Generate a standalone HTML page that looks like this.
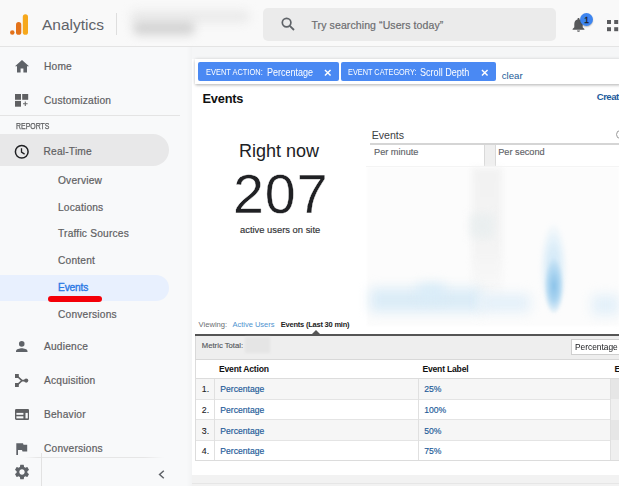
<!DOCTYPE html>
<html><head><meta charset="utf-8">
<style>
*{box-sizing:border-box;margin:0;padding:0}
html,body{width:621px;height:486px;overflow:hidden;background:#fff;font-family:"Liberation Sans",sans-serif;position:relative}
.a{position:absolute;white-space:nowrap;line-height:1}
</style></head><body>
<div class="a" style="left:0px;top:0px;width:621px;height:46px;background:#f9f9f9;"></div>
<div class="a" style="left:0px;top:46px;width:621px;height:1px;background:#e4e4e4;"></div>
<svg class="a" style="left:9px;top:13px" width="21" height="24" viewBox="0 0 21 24">
  <rect x="13.8" y="1.2" width="5.2" height="20.6" rx="2.6" fill="#f6a81c"/>
  <rect x="7" y="9.1" width="5.3" height="12.7" rx="2.65" fill="#e3721a"/>
  <circle cx="3.3" cy="19.6" r="2.25" fill="#e3721a"/>
</svg>
<div class="a" style="left:42px;top:17.48px;font-size:15.5px;color:#5f6368;">Analytics</div>
<div class="a" style="left:116px;top:13px;width:1px;height:22px;background:#dedede;"></div>
<div class="a" style="left:130px;top:10px;width:120px;height:13px;background:#ebebeb;filter:blur(5px);border-radius:6px"></div>
<div class="a" style="left:133px;top:21px;width:62px;height:14px;background:#d4d4d4;filter:blur(5px);border-radius:6px"></div>
<div class="a" style="left:263px;top:8px;width:293px;height:33px;background:#ebebeb;border-radius:5px"></div>
<svg class="a" style="left:281px;top:17px" width="14" height="14" viewBox="0 0 14 14"><circle cx="5.6" cy="5.6" r="4.3" fill="none" stroke="#5f6368" stroke-width="1.7"/><line x1="8.8" y1="8.8" x2="13" y2="13" stroke="#5f6368" stroke-width="1.8"/></svg>
<div class="a" style="left:311.5px;top:19.51px;font-size:10.5px;color:#6b6d70;letter-spacing:.1px;-webkit-text-stroke:.2px #6b6d70">Try searching “Users today”</div>
<svg class="a" style="left:572px;top:17px" width="13" height="15" viewBox="0 0 13 15"><path d="M6.5 1c-.6 0-1 .4-1 1v.5C3.4 3 2.3 4.8 2.3 7v3.3L.6 12v.8h11.8V12l-1.7-1.7V7c0-2.2-1.1-4-3.2-4.5V2c0-.6-.4-1-1-1z M5 13.4h3c0 .8-.7 1.4-1.5 1.4S5 14.2 5 13.4z" fill="#58595b"/></svg>
<div class="a" style="left:580px;top:13px;width:13.3px;height:13.3px;border-radius:50%;background:#3d85f0;box-shadow:0 1px 1.5px rgba(0,0,0,.25)"></div>
<div class="a" style="left:584.2px;top:16.10px;font-size:8.5px;color:#202124;-webkit-text-stroke:.3px #202124">1</div>
<svg class="a" style="left:607px;top:20px" width="12" height="12" viewBox="0 0 12 12"><rect x="0" y="0" width="4" height="4" fill="#5a5b5e"/><rect x="7.2" y="0" width="4" height="4" fill="#5a5b5e"/><rect x="0" y="7.2" width="4" height="4" fill="#5a5b5e"/><rect x="7.2" y="7.2" width="4" height="4" fill="#5a5b5e"/></svg>
<div class="a" style="left:0px;top:47px;width:192px;height:439px;background:#f8f9fa;"></div>
<div class="a" style="left:186px;top:47px;width:6px;height:439px;background:linear-gradient(90deg,rgba(0,0,0,0),rgba(0,0,0,.025));"></div>
<div class="a" style="left:0px;top:115px;width:180px;height:1px;background:#e4e4e4;"></div>
<svg class="a" style="left:14.5px;top:60px" width="14" height="12.5" viewBox="0 0 14 12.5"><path d="M7 0L0 6.2h2V12.5h3.6V8.6h2.8v3.9H12V6.2h2z" fill="#5f6368"/></svg>
<div class="a" style="left:44px;top:61.57px;font-size:10.2px;color:#5f6062;letter-spacing:.2px;-webkit-text-stroke:.2px #5f6062;">Home</div>
<svg class="a" style="left:15px;top:94px" width="13.5" height="12.8" viewBox="0 0 13.5 12.8"><rect x="0" y="0" width="6" height="5.8" fill="#5f6062"/><rect x="7.2" y="0" width="6" height="5.8" fill="#5f6062"/><rect x="0" y="6.9" width="6" height="5.8" fill="#5f6062"/><path d="M10.3 7.4v4.6M8 9.7h4.6" stroke="#6a6b6d" stroke-width="1.1"/></svg>
<div class="a" style="left:44px;top:95.67px;font-size:10.2px;color:#5f6062;letter-spacing:.2px;-webkit-text-stroke:.2px #5f6062;">Customization</div>
<div class="a" style="left:16px;top:121.89px;font-size:8.4px;color:#5f6062;transform:scaleX(.83);transform-origin:0 0;-webkit-text-stroke:.25px #5f6062">REPORTS</div>
<div class="a" style="left:0px;top:134px;width:169px;height:32px;background:#e8e8e9;border-radius:0 16px 16px 0"></div>
<svg class="a" style="left:14px;top:143.5px" width="15.5" height="15.5" viewBox="0 0 15.5 15.5"><circle cx="7.75" cy="7.75" r="6.35" fill="none" stroke="#202124" stroke-width="1.5"/><path d="M7.5 4.3V8.1L10.6 10.1" fill="none" stroke="#202124" stroke-width="1.3"/></svg>
<div class="a" style="left:43.5px;top:146.57px;font-size:10.2px;color:#5f6062;letter-spacing:.2px;-webkit-text-stroke:.2px #5f6062;">Real-Time</div>
<div class="a" style="left:58px;top:175.87px;font-size:10.2px;color:#5f6062;letter-spacing:.2px;-webkit-text-stroke:.2px #5f6062;">Overview</div>
<div class="a" style="left:58px;top:202.57px;font-size:10.2px;color:#5f6062;letter-spacing:.2px;-webkit-text-stroke:.2px #5f6062;">Locations</div>
<div class="a" style="left:58px;top:229.17px;font-size:10.2px;color:#5f6062;letter-spacing:.2px;-webkit-text-stroke:.2px #5f6062;">Traffic Sources</div>
<div class="a" style="left:58px;top:256.07px;font-size:10.2px;color:#5f6062;letter-spacing:.2px;-webkit-text-stroke:.2px #5f6062;">Content</div>
<div class="a" style="left:0px;top:275px;width:169px;height:26px;background:#e8f0fe;border-radius:0 13px 13px 0"></div>
<div class="a" style="left:58px;top:283.37px;font-size:10.2px;color:#2a78e4;-webkit-text-stroke:.35px #2a78e4;letter-spacing:-.15px">Events</div>
<div class="a" style="left:47.8px;top:296.2px;width:54.2px;height:6.3px;background:#f40008;border-radius:3.1px"></div>
<div class="a" style="left:58px;top:310.37px;font-size:10.2px;color:#5f6062;letter-spacing:.2px;-webkit-text-stroke:.2px #5f6062;">Conversions</div>
<svg class="a" style="left:16px;top:340.5px" width="11.5" height="11.5" viewBox="0 0 12 12"><circle cx="6" cy="3" r="2.9" fill="#5f6368"/><path d="M0 12v-1.5c0-2 4-3 6-3s6 1 6 3V12z" fill="#5f6368"/></svg>
<div class="a" style="left:44px;top:342.17px;font-size:10.2px;color:#5f6062;letter-spacing:.2px;-webkit-text-stroke:.2px #5f6062;">Audience</div>
<svg class="a" style="left:14px;top:373px" width="15" height="15" viewBox="0 0 15 15"><path d="M3 3L8 7.6L3 12.2M8 7.6H12" fill="none" stroke="#5f6062" stroke-width="1.6"/><rect x="1" y="1" width="3.8" height="4" fill="#5f6062"/><rect x="1" y="10" width="3.8" height="4" fill="#5f6062"/><circle cx="12.2" cy="7.6" r="2.1" fill="#5f6062"/></svg>
<div class="a" style="left:44px;top:376.17px;font-size:10.2px;color:#5f6062;letter-spacing:.2px;-webkit-text-stroke:.2px #5f6062;">Acquisition</div>
<svg class="a" style="left:14.7px;top:408.9px" width="14.2" height="10.9" viewBox="0 0 14.2 10.9"><rect x="0" y="0" width="14.2" height="10.9" rx="1.3" fill="#5f6062"/><rect x="1.4" y="3.9" width="7" height="1.9" fill="#f8f9fa"/><rect x="1.4" y="7.3" width="7" height="2.1" fill="#f8f9fa"/><rect x="10.5" y="3.9" width="2.3" height="5.5" fill="#f8f9fa"/></svg>
<div class="a" style="left:44px;top:409.97px;font-size:10.2px;color:#5f6062;letter-spacing:.2px;-webkit-text-stroke:.2px #5f6062;">Behavior</div>
<svg class="a" style="left:16px;top:443px" width="11.5" height="12" viewBox="0 0 11.5 12"><path d="M0.3 0.3H7L7.5 1.8H11.2V8.5H6.5L6 7H2V12H0.3z" fill="#5f6368"/></svg>
<div class="a" style="left:44px;top:443.77px;font-size:10.2px;color:#5f6062;letter-spacing:.2px;-webkit-text-stroke:.2px #5f6062;">Conversions</div>
<div class="a" style="left:24px;top:457px;width:140px;height:1px;background:linear-gradient(90deg,rgba(230,230,230,0),#e6e6e6 14px,#e6e6e6 120px,rgba(230,230,230,0));"></div>
<div class="a" style="left:41px;top:453px;width:1px;height:33px;background:#e2e2e2;"></div>
<svg class="a" style="left:13px;top:462.8px" width="18" height="18" viewBox="0 0 24 24"><path fill="#5f6368" d="M19.14 12.94c.04-.3.06-.61.06-.94 0-.32-.02-.64-.07-.94l2.03-1.58a.49.49 0 00.12-.61l-1.92-3.32a.488.488 0 00-.59-.22l-2.39.96c-.5-.38-1.030-.7-1.62-.94l-.36-2.54a.484.484 0 00-.48-.41h-3.84c-.24 0-.43.17-.47.41l-.36 2.54c-.59.24-1.13.57-1.62.94l-2.39-.96a.48.48 0 00-.59.22L2.74 8.87c-.12.21-.08.47.12.61l2.03 1.58c-.05.3-.09.63-.09.94s.02.64.07.94l-2.03 1.58a.49.49 0 00-.12.61l1.920 3.32c.12.22.37.29.59.22l2.39-.96c.5.38 1.03.7 1.62.94l.36 2.54c.05.24.24.41.48.41h3.84c.24 0 .44-.17.47-.41l.36-2.54c.59-.24 1.13-.56 1.62-.94l2.39.96c.22.08.47 0 .59-.22l1.92-3.32c.12-.22.07-.47-.12-.61l-2.01-1.58zM12 15.6c-1.98 0-3.6-1.62-3.6-3.6s1.62-3.6 3.6-3.6 3.6 1.62 3.6 3.6-1.62 3.6-3.6 3.6z"/></svg>
<svg class="a" style="left:157.5px;top:469.5px" width="7" height="9" viewBox="0 0 7 9"><path d="M5.8 0.8L1.6 4.5L5.8 8.2" fill="none" stroke="#5f6368" stroke-width="1.5"/></svg>
<div class="a" style="left:192px;top:47px;width:429px;height:439px;background:#fff;"></div>
<div class="a" style="left:192px;top:47px;width:429px;height:12px;background:#f5f6f7;"></div>
<div class="a" style="left:195px;top:59px;width:426px;height:25px;background:#fff;box-shadow:0 0 3px rgba(0,0,0,.16),-.5px 1.5px 3px rgba(0,0,0,.2)"></div>
<div class="a" style="left:198px;top:62px;width:141px;height:19px;background:#4a89f3;border-radius:2px"></div>
<div class="a" style="left:205.5px;top:68.38px;font-size:9px;color:#fff;transform:scaleX(.83);transform-origin:0 0">EVENT ACTION:</div>
<div class="a" style="left:266.5px;top:67.88px;font-size:10.3px;color:#fff;transform:scaleX(.875);transform-origin:0 0">Percentage</div>
<svg class="a" style="left:324px;top:69px" width="7.5" height="7.5" viewBox="0 0 8 8"><path d="M1 1L7 7M7 1L1 7" stroke="#fff" stroke-width="1.5"/></svg>
<div class="a" style="left:341px;top:62px;width:154.5px;height:19px;background:#4a89f3;border-radius:2px"></div>
<div class="a" style="left:348px;top:68.38px;font-size:9px;color:#fff;transform:scaleX(.815);transform-origin:0 0">EVENT CATEGORY:</div>
<div class="a" style="left:420.3px;top:67.88px;font-size:10.3px;color:#fff;transform:scaleX(.88);transform-origin:0 0">Scroll Depth</div>
<svg class="a" style="left:481px;top:69px" width="7.5" height="7.5" viewBox="0 0 8 8"><path d="M1 1L7 7M7 1L1 7" stroke="#fff" stroke-width="1.5"/></svg>
<div class="a" style="left:501.8px;top:71.37px;font-size:9.6px;color:#215a97;">clear</div>
<div class="a" style="left:202.5px;top:92.76px;font-size:12.8px;color:#111;font-weight:bold;letter-spacing:-.2px">Events</div>
<div class="a" style="left:596.8px;top:92.37px;font-size:9.6px;color:#1d5b9c;font-weight:bold;letter-spacing:-.55px">Creat</div>
<div class="a" style="left:239px;top:142.06px;font-size:18px;color:#202124;">Right now</div>
<div class="a" style="left:233px;top:166.82px;font-size:55.5px;color:#202124;letter-spacing:1px;-webkit-text-stroke:.4px #fff">207</div>
<div class="a" style="left:240px;top:224.94px;font-size:9.4px;color:#303134;-webkit-text-stroke:.15px #303134">active users on site</div>
<div class="a" style="left:371.7px;top:130.23px;font-size:10.6px;color:#3c4043;">Events</div>
<div class="a" style="left:616px;top:129.5px;width:9.5px;height:9.5px;background:transparent;border:1.2px solid #9a9a9a;border-radius:50%"></div>
<div class="a" style="left:370px;top:143px;width:249px;height:2px;background:#d5d5d5;"></div>
<div class="a" style="left:483.5px;top:145px;width:12.5px;height:22px;background:#efefef;border-left:1px solid #d9d9d9;border-right:1px solid #d9d9d9"></div>
<div class="a" style="left:374px;top:147.91px;font-size:9.2px;color:#5f6368;-webkit-text-stroke:.15px #5f6368">Per minute</div>
<div class="a" style="left:498.2px;top:148.01px;font-size:9.2px;color:#5f6368;-webkit-text-stroke:.15px #5f6368">Per second</div>
<div class="a" style="left:370px;top:166px;width:113px;height:1px;background:#f0f0f0;"></div>
<div class="a" style="left:367px;top:167px;width:252px;height:159px;background:#fcfcfc;filter:blur(1px)"></div>
<div class="a" style="left:472px;top:168px;width:30px;height:145px;background:linear-gradient(#f2f2f2,#f4f4f4 60%,rgba(245,245,245,0));filter:blur(3px)"></div>
<div class="a" style="left:470px;top:214px;width:24px;height:24px;background:#e8eeef;filter:blur(5px);opacity:.8"></div>
<div class="a" style="left:370px;top:288px;width:112px;height:24px;background:#dbecf7;filter:blur(6px)"></div>
<div class="a" style="left:418px;top:284px;width:26px;height:16px;background:#d9ecf8;filter:blur(6px)"></div>
<div class="a" style="left:480px;top:294px;width:50px;height:18px;background:#e4f0f9;filter:blur(6px)"></div>
<div class="a" style="left:540px;top:222px;width:27px;height:94px;background:radial-gradient(closest-side,rgba(195,225,245,.9),rgba(212,234,248,.7) 55%,rgba(255,255,255,0));filter:blur(2px)"></div>
<div class="a" style="left:544px;top:258px;width:20px;height:56px;background:radial-gradient(closest-side,#8cc3ea,#aad4f0 50%,rgba(190,222,244,0));filter:blur(1.2px)"></div>
<div class="a" style="left:592px;top:295px;width:27px;height:20px;background:#e3f0f9;filter:blur(6px)"></div>
<div class="a" style="left:366px;top:166px;width:253px;height:1px;background:#f4f4f4;"></div>
<div class="a" style="left:198.6px;top:320.77px;font-size:7.6px;color:#6b6e72;">Viewing:</div>
<div class="a" style="left:232.4px;top:320.85px;font-size:7.5px;color:#4f93cf;">Active Users</div>
<div class="a" style="left:280.8px;top:320.85px;font-size:7.5px;color:#222;font-weight:bold;letter-spacing:-.22px">Events (Last 30 min)</div>
<div class="a" style="left:195px;top:334px;width:424px;height:2px;background:#555;"></div>
<div class="a" style="left:311.6px;top:330px;width:0;height:0;border-left:4px solid transparent;border-right:4px solid transparent;border-bottom:4px solid #555"></div>
<div class="a" style="left:195px;top:336px;width:424px;height:23px;background:#eeeeee;border-left:1px solid #d8d8d8"></div>
<div class="a" style="left:195px;top:359px;width:424px;height:1px;background:#d8d8d8;"></div>
<div class="a" style="left:201.8px;top:341.88px;font-size:7.7px;color:#55585c;-webkit-text-stroke:.15px #55585c">Metric Total:</div>
<div class="a" style="left:244.5px;top:337px;width:25px;height:16px;background:#e5e5e5;filter:blur(1.2px)"></div>
<div class="a" style="left:570.5px;top:338.5px;width:50px;height:16px;background:#fff;border:1px solid #cfcfcf"></div>
<div class="a" style="left:574.5px;top:342.07px;font-size:9.6px;color:#202124;transform:scaleX(.87);transform-origin:0 0">Percentage</div>
<div class="a" style="left:195px;top:360px;width:1px;height:100px;background:#dcdcdc;"></div>
<div class="a" style="left:195px;top:460px;width:424px;height:1px;background:#dcdcdc;"></div>
<div class="a" style="left:219px;top:365.22px;font-size:8.6px;color:#111;font-weight:bold;letter-spacing:-.2px">Event Action</div>
<div class="a" style="left:422.4px;top:365.02px;font-size:8.6px;color:#111;font-weight:bold;letter-spacing:-.2px">Event Label</div>
<div class="a" style="left:614.5px;top:365.02px;font-size:8.6px;color:#111;font-weight:bold">E</div>
<div class="a" style="left:196px;top:378px;width:423px;height:1px;background:#dcdcdc;"></div>
<div class="a" style="left:196px;top:379px;width:423px;height:20px;background:#f6f6f6;"></div>
<div class="a" style="left:196px;top:399px;width:423px;height:1px;background:#e4e4e4;"></div>
<div class="a" style="left:196px;top:419px;width:423px;height:1px;background:#e4e4e4;"></div>
<div class="a" style="left:196px;top:420px;width:423px;height:20px;background:#f6f6f6;"></div>
<div class="a" style="left:196px;top:440px;width:423px;height:1px;background:#e4e4e4;"></div>
<div class="a" style="left:214px;top:379px;width:1px;height:81px;background:#e0e0e0;"></div>
<div class="a" style="left:418px;top:379px;width:1px;height:81px;background:#e0e0e0;"></div>
<div class="a" style="left:610px;top:379px;width:9px;height:81px;background:#efefef;border-left:1px solid #e0e0e0"></div>
<div class="a" style="left:611px;top:379px;width:8px;height:20px;background:#e6e6e6;"></div>
<div class="a" style="left:611px;top:420px;width:8px;height:20px;background:#e6e6e6;"></div>
<div class="a" style="left:201.8px;top:385.05px;font-size:8.8px;color:#202124;-webkit-text-stroke:.1px #202124">1.</div>
<div class="a" style="left:220.3px;top:385.22px;font-size:8.6px;color:#1c5a98;-webkit-text-stroke:.15px #1c5a98">Percentage</div>
<div class="a" style="left:424.2px;top:385.22px;font-size:8.6px;color:#1c5a98;-webkit-text-stroke:.15px #1c5a98">25%</div>
<div class="a" style="left:201.8px;top:405.85px;font-size:8.8px;color:#202124;-webkit-text-stroke:.1px #202124">2.</div>
<div class="a" style="left:220.3px;top:406.02px;font-size:8.6px;color:#1c5a98;-webkit-text-stroke:.15px #1c5a98">Percentage</div>
<div class="a" style="left:424.2px;top:406.02px;font-size:8.6px;color:#1c5a98;-webkit-text-stroke:.15px #1c5a98">100%</div>
<div class="a" style="left:201.8px;top:426.55px;font-size:8.8px;color:#202124;-webkit-text-stroke:.1px #202124">3.</div>
<div class="a" style="left:220.3px;top:426.72px;font-size:8.6px;color:#1c5a98;-webkit-text-stroke:.15px #1c5a98">Percentage</div>
<div class="a" style="left:424.2px;top:426.72px;font-size:8.6px;color:#1c5a98;-webkit-text-stroke:.15px #1c5a98">50%</div>
<div class="a" style="left:201.8px;top:446.75px;font-size:8.8px;color:#202124;-webkit-text-stroke:.1px #202124">4.</div>
<div class="a" style="left:220.3px;top:446.92px;font-size:8.6px;color:#1c5a98;-webkit-text-stroke:.15px #1c5a98">Percentage</div>
<div class="a" style="left:424.2px;top:446.92px;font-size:8.6px;color:#1c5a98;-webkit-text-stroke:.15px #1c5a98">75%</div>
<div class="a" style="left:192px;top:475px;width:427px;height:11px;background:#f2f2f2;"></div>
<div class="a" style="left:192px;top:483px;width:427px;height:1px;background:#e6e6e6;"></div>
<div class="a" style="left:619px;top:0px;width:2px;height:486px;background:#fff;"></div>
</body></html>
